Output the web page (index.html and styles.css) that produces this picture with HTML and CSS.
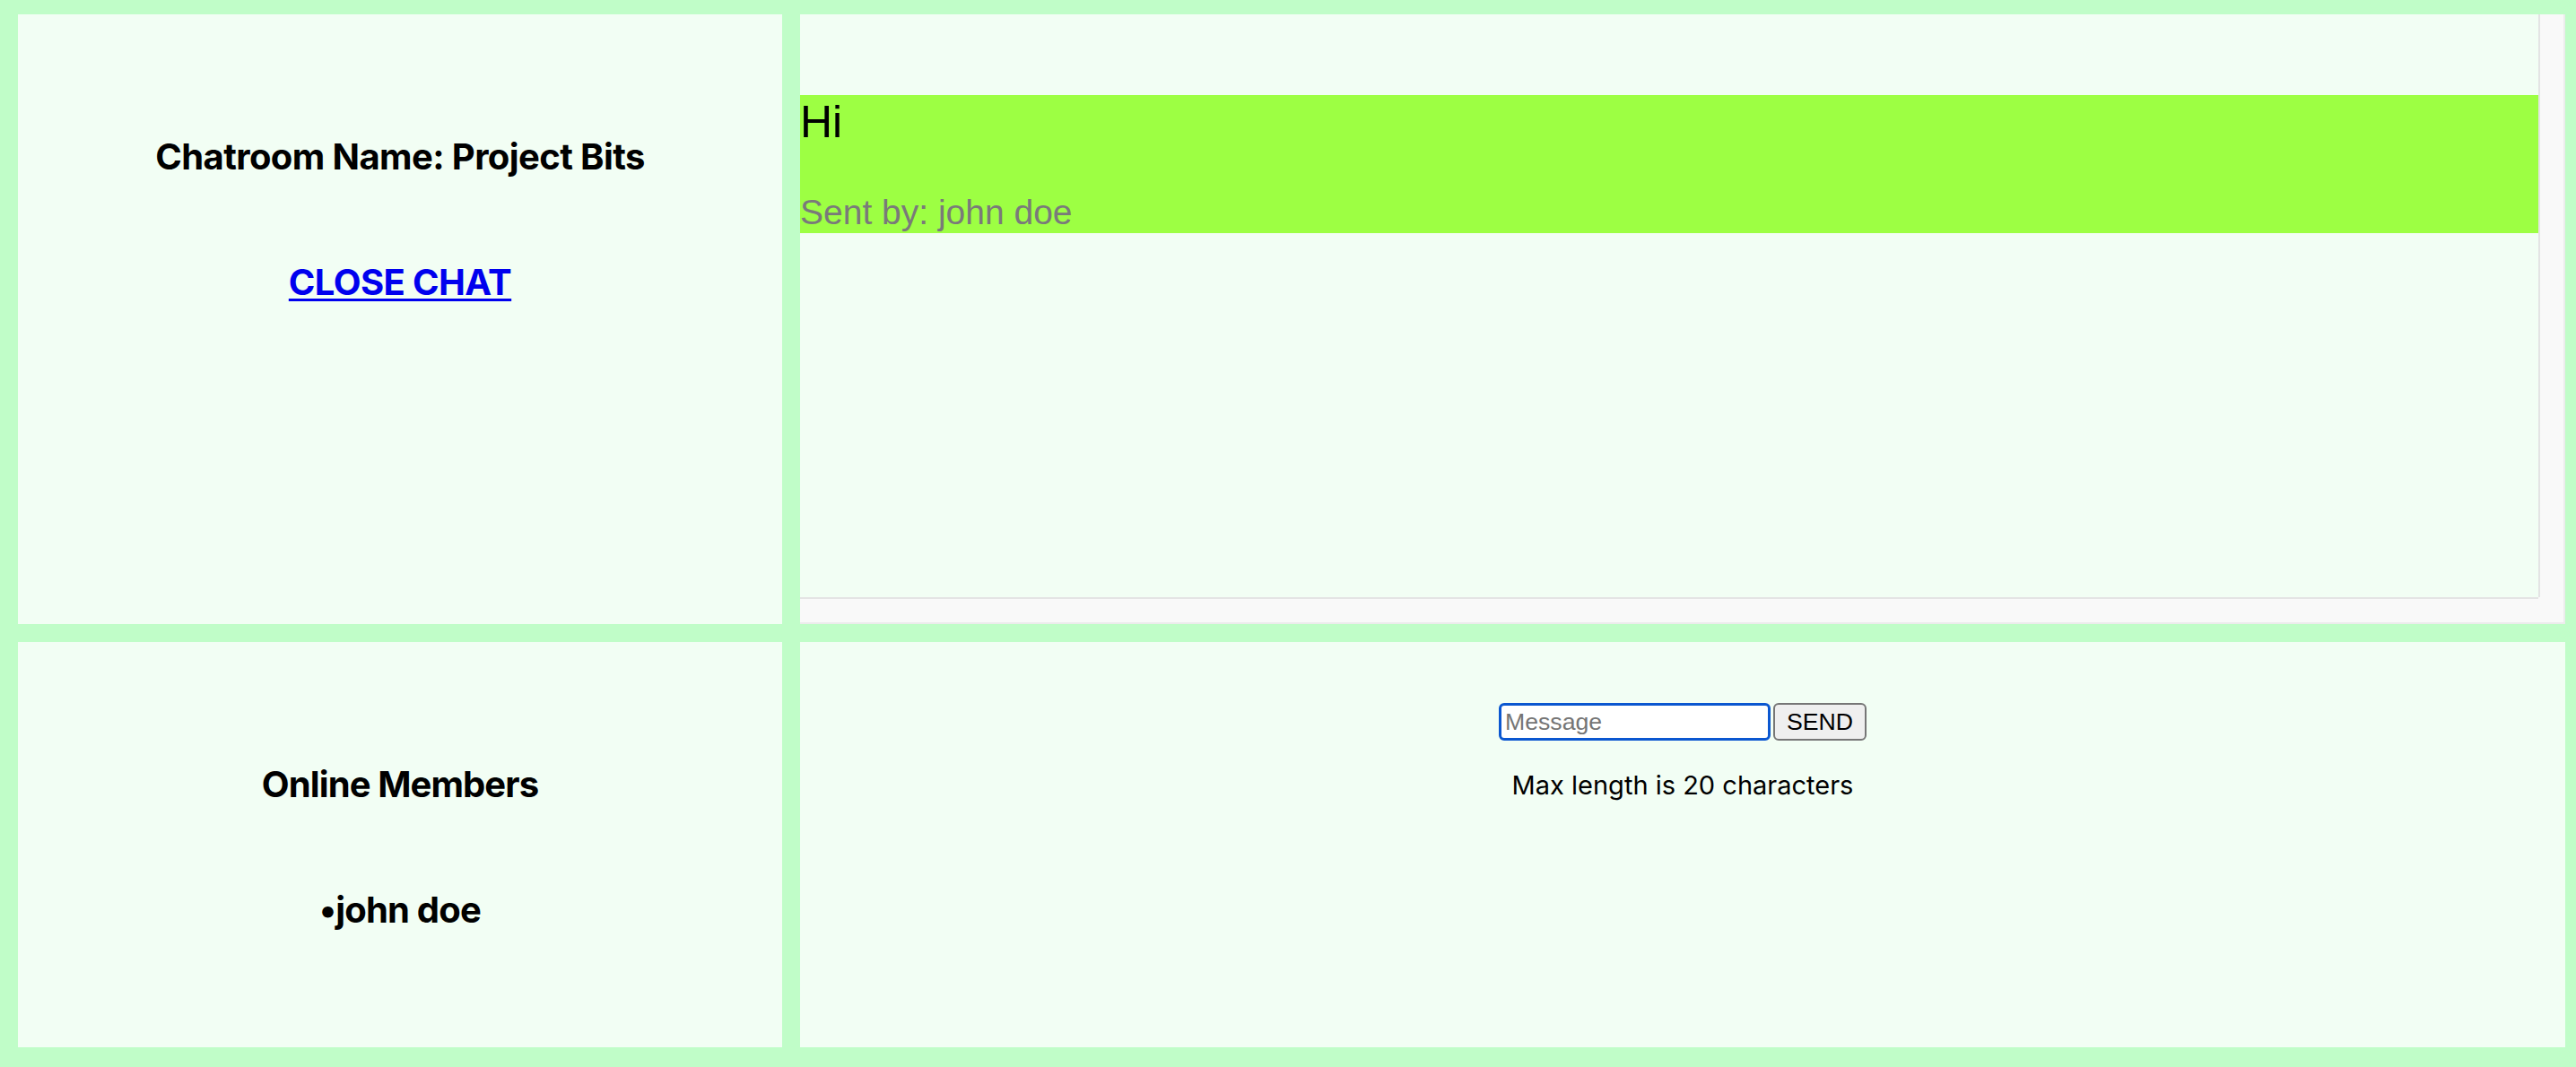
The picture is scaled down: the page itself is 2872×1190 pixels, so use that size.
FILE: index.html
```html
<!DOCTYPE html>
<html lang="en">
<head>
<meta charset="utf-8">
<title>Chatroom</title>
<link rel="stylesheet" href="styles.css">
</head>
<body>
<main class="layout">
  <section class="panel room-info">
    <h2 class="panel-title">Chatroom Name: Project Bits</h2>
    <p class="close-wrap"><a class="close-link" href="#">CLOSE CHAT</a></p>
  </section>
  <section class="panel chat-log">
    <div class="chat-scroll">
      <div class="message">
        <p class="message-text">Hi</p>
        <p class="message-sender">Sent by: john doe</p>
      </div>
    </div>
    <div class="scroll-track scroll-track-v"></div>
    <div class="scroll-track scroll-track-h"></div>
    <div class="scroll-corner"></div>
  </section>
  <section class="panel members">
    <h2 class="panel-title members-title">Online Members</h2>
    <ul class="member-list">
      <li class="member">•john doe</li>
    </ul>
  </section>
  <section class="panel composer">
    <form class="composer-row">
      <input class="message-input" type="text" placeholder="Message" maxlength="20"><button class="send-btn" type="button">SEND</button>
    </form>
    <p class="hint">Max length is 20 characters</p>
  </section>
</main>
</body>
</html>
```
FILE: styles.css
```css
html, body {
  margin: 0;
  background: #c0fdc8;
}

body {
  font-family: Inter, "Noto Sans", sans-serif;
  color: #000;
}

.layout {
  display: grid;
  grid-template-columns: 852px 1968px;
  grid-template-rows: 680px 452px;
  gap: 20px;
  padding: 16px 12px 22px 20px;
}

.panel {
  background: #f2fef4;
  box-sizing: border-box;
  min-width: 0;
  min-height: 0;
}

.panel-title {
  margin: 0;
  font-size: 40px;
  font-weight: 700;
  line-height: 48px;
  letter-spacing: -0.6px;
}

.room-info {
  text-align: center;
  padding-top: 135px;
}

.close-wrap {
  margin: 92px 0 0;
  font-size: 40px;
  font-weight: 700;
  line-height: 48px;
  letter-spacing: -0.6px;
}

.close-link {
  color: #0000ee;
  text-decoration: underline;
  text-decoration-thickness: 3px;
  text-underline-offset: 4px;
}

.members {
  text-align: center;
  padding-top: 135px;
}

.members-title {
  letter-spacing: -0.9px;
}

.member-list {
  list-style: none;
  margin: 92px 0 0;
  padding: 0;
}

.member {
  font-size: 40px;
  font-weight: 700;
  line-height: 48px;
  letter-spacing: -0.8px;
}

/* chat log with its (empty) scrollbar tracks */
.chat-log {
  display: grid;
  grid-template-columns: 1fr 30px;
  grid-template-rows: 1fr 30px;
}

.chat-scroll {
  overflow: hidden;
  padding-top: 90px;
  min-width: 0;
  min-height: 0;
}

.scroll-track {
  background: #f9f9f9;
  box-sizing: border-box;
}

.scroll-track-v {
  border-left: 2px solid #e4e4e4;
  border-right: 2px solid #ececec;
}

.scroll-track-h {
  border-top: 2px solid #e4e4e4;
  border-bottom: 2px solid #ececec;
}

.scroll-corner {
  background: #f9f9f9;
  box-sizing: border-box;
  border-right: 2px solid #ececec;
  border-bottom: 2px solid #ececec;
}

.message {
  background: #9dff43;
  height: 154px;
  display: flex;
  flex-direction: column;
  justify-content: space-between;
  font-family: "Liberation Sans", Arial, sans-serif;
}

.message-text {
  margin: 2px 0 0;
  font-size: 50px;
  line-height: 57px;
}

.message-sender {
  margin: 0;
  font-size: 39px;
  line-height: 46px;
  color: #7a7a7a;
}

.composer {
  padding-top: 68px;
  text-align: center;
}

.composer-row {
  display: flex;
  justify-content: center;
  align-items: center;
  gap: 3px;
  margin: 0;
}

.message-input {
  width: 303px;
  height: 42px;
  box-sizing: border-box;
  border: 3px solid #0b57d0;
  border-radius: 6px;
  padding: 0 4px;
  background: #fff;
  font-family: "Liberation Sans", Arial, sans-serif;
  font-size: 26.67px;
  outline: none;
}

.message-input::placeholder {
  color: #757575;
}

.send-btn {
  height: 42px;
  box-sizing: border-box;
  border: 2px solid #767676;
  border-radius: 6px;
  background: #efefef;
  padding: 0 13px;
  font-family: "Liberation Sans", Arial, sans-serif;
  font-size: 26.67px;
  color: #000;
}

.hint {
  margin: 32px 0 0;
  font-size: 29px;
  line-height: 35px;
}
```
